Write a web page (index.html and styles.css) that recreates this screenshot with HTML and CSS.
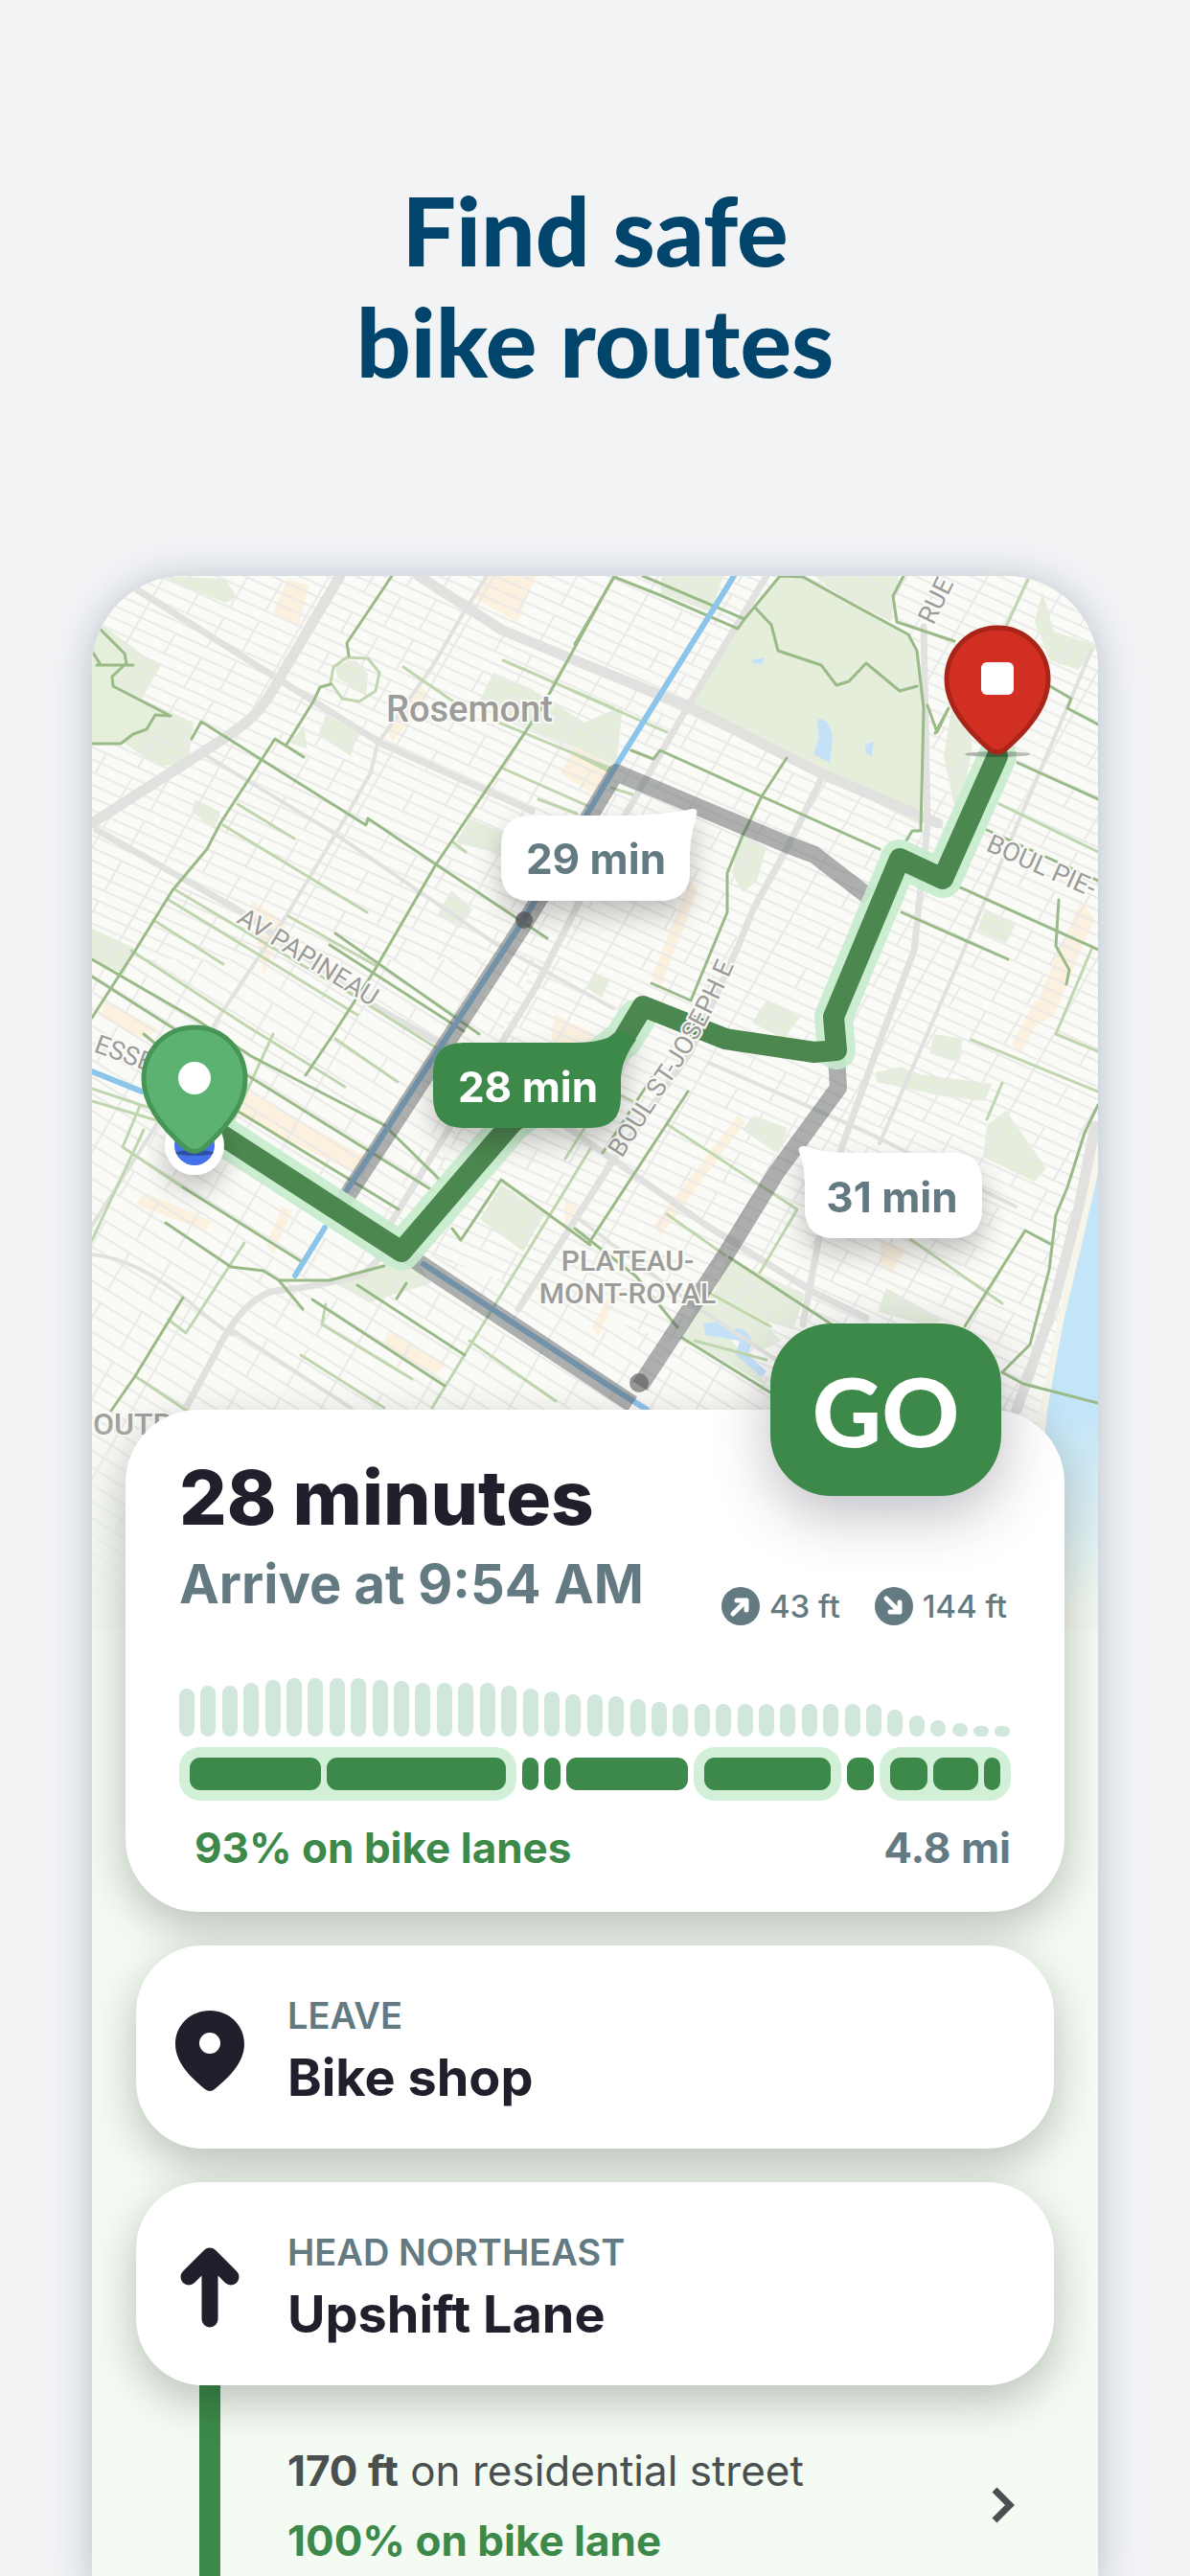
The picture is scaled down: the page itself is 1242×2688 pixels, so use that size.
FILE: index.html
```html
<!DOCTYPE html>
<html lang="en">
<head>
    <meta charset="UTF-8">
    <meta name="viewport" content="width=device-width, initial-scale=1.0">
    <title>Find safe bike routes</title>
    <link rel="stylesheet" href="styles.css">
</head>
<body>

    <main class="page">
      <h1 class="headline">Find safe<br>bike routes</h1>

      <div class="phone">
        <svg class="map" viewBox="96 602 1050 1100" role="img" aria-label="Map with three bike routes">
          <defs>
            <pattern id="streets" width="150" height="48" patternUnits="userSpaceOnUse" patternTransform="matrix(.91 .41 -.5 .87 0 0)">
              <path d="M0 1H150M0 13H150M0 25H150M0 37H150M2 0V48M42 1V25M78 13V48M112 0V37" />
            </pattern>
            <pattern id="streets-low" width="170" height="60" patternUnits="userSpaceOnUse" patternTransform="matrix(.85 .53 -.5 .87 0 0)">
              <path d="M0 1H170M0 16H170M0 31H170M0 46H170M2 0V60M50 1V31M88 16V60M130 0V46" />
            </pattern>
            <linearGradient id="fade" x1="0" y1="1470" x2="0" y2="1680" gradientUnits="userSpaceOnUse">
              <stop offset="0" stop-color="#f1f8ef" stop-opacity="0" />
              <stop offset="1" stop-color="#f1f8ef" />
            </linearGradient>
            <filter id="shadow" x="-30%" y="-30%" width="160%" height="200%">
              <feDropShadow dx="0" dy="14" stdDeviation="14" flood-color="#000" flood-opacity=".24" />
            </filter>
            <path id="joseph" d="M649 1210L700 1130Q742 1070 780 975" />
          </defs>

          <rect x="96" y="602" width="1050" height="1100" fill="#fafaf6" />

          <!-- parks -->
          <g class="park">
            <path d="M814 602L838 603L896 635L948 663L957 680L964 740L961 862L718 740L777 647Z" />
            <path d="M96 645L150 685L168 695L148 730L202 755L196 800L165 800L130 777L96 776Z" />
            <path d="M160 602L235 605L248 625L235 630L190 612Z" />
            <path d="M350 694L372 690L384 704L382 728L365 716L352 708Z" />
            <path d="M340 747L374 765L366 790L332 768ZM318 758L320 782L302 776Z" />
            <path d="M515 703L555 720L610 755L650 738L643 800L560 765L500 733Z" />
            <path d="M690 602H755L742 640L690 620ZM850 602H938L930 650L880 625Z" />
            <path d="M490 855L525 870L545 905L515 890L476 880Z" />
            <path d="M204 835L230 848L224 866L200 848ZM96 970L140 990L130 1018L96 1002Z" />
            <path d="M471 930L493 950L480 970L457 955ZM620 1015L636 1024L628 1042L612 1032Z" />
            <path d="M773 870L800 885L790 920L775 932L764 912ZM1028 950L1060 965L1050 985L1020 972Z" />
            <path d="M800 1045L835 1062L818 1085L785 1068ZM975 1080L1005 1085L1000 1110L970 1100Z" />
            <path d="M914 1120L940 1114L960 1122L1035 1132L1028 1150L985 1145L915 1130Z" />
            <path d="M1050 1160L1092 1220L1080 1234L1026 1208L1030 1175Z" />
            <path d="M786 1165L822 1178L812 1205L775 1180ZM523 1237L569 1267L546 1307L501 1273Z" />
            <path d="M758 1315L840 1352L828 1388L800 1380L745 1352ZM925 1345L984 1378L972 1385L916 1370Z" />
            <path d="M712 1395L735 1350L790 1375L815 1400L795 1410L760 1395L804 1450ZM344 1337L430 1310L450 1340L385 1360Z" />
            <path d="M1088 618L1100 660L1146 675L1125 700L1096 690L1080 650ZM1000 700L1015 780L1000 860L985 790Z" />
          </g>

          <!-- commercial blocks -->
          <g class="shops">
            <path d="M505 602H560L540 650L495 625ZM300 605L322 612L312 655L285 640ZM600 780L640 800L620 830L585 808Z" />
            <path d="M440 718L448 728L410 775L402 762ZM262 940L300 965L275 1018L268 980ZM110 1045L165 1075L150 1085L105 1062Z" />
            <path d="M720 920L728 930L690 1030L680 1020ZM1128 940L1142 960L1100 1060L1068 1080ZM1080 1045L1092 1050L1065 1100L1056 1090Z" />
            <path d="M258 1140L385 1210L375 1228L250 1165ZM150 1245L220 1275L215 1285L142 1258ZM295 1260L305 1265L285 1310L278 1300Z" />
            <path d="M580 1060L620 1080L600 1110L575 1085ZM770 1165L778 1172L690 1290L682 1280ZM920 1295L945 1305L930 1330L918 1318Z" />
            <path d="M405 1390L465 1425L455 1435L400 1405ZM640 1345L645 1350L625 1395L618 1385ZM590 1250L605 1262L590 1280Z" />
          </g>

          <rect x="96" y="602" width="1050" height="400" fill="url(#streets)" />
          <path d="M96 1002H560L420 1300L900 1472V1702H96Z" fill="url(#streets-low)" />
          <path d="M560 1002H1146V1702H900V1472L420 1300Z" fill="url(#streets)" />
          <path d="M814 602L838 603L896 635L948 663L957 680L964 740L961 862L718 740L777 647Z" fill="#e4eedb" />
          <path d="M96 655L140 690L118 715L178 748L140 767L126 777H96Z" fill="#e4efdc" />

          <!-- river -->
          <path d="M1146 1190L1128 1260L1108 1360L1085 1472L1060 1600V1702H1146Z" fill="#f7f4ea" />
          <path d="M1146 1225L1128 1304L1110 1380L1093 1472L1085 1560L1080 1702H1146Z" fill="#c3e5f8" />
          <g fill="#c5e1f8">
            <path d="M853 752Q868 750 869 775L866 797L849 788L855 770ZM903 778L912 775L910 790L904 787ZM784 690L798 687L795 694L786 693Z" />
            <path d="M734 1382L752 1380L765 1388Q780 1384 785 1402L781 1415L800 1432L795 1438L768 1415L772 1400L736 1394Z" />
          </g>

          <!-- main roads -->
          <g class="road">
            <path class="w12" d="M437 602L523 658L600 690L718 738L861 810L979 860" />
            <path class="w8" d="M141 615L280 703L398 777L555 847" />
            <path class="w12" d="M355 602L291 710Q275 740 259 753T216 783L96 860" />
            <path class="w8" d="M101 867L248 950L394 1053L455 1087L600 1183L736 1279L850 1350L904 1376" />
            <path class="w4" d="M508 602L484 640L451 697L394 777L387 807L359 857L301 953L230 1060L160 1180L96 1280" />
            <path class="w8" d="M800 602L718 738L636 880L560 1030L400 1290" />
            <path class="w8" d="M859 810L821 887L786 950L771 987L720 1100L636 1218L541 1367" />
            <path class="w8" d="M964 655L968 863L954 993L921 1080L879 1197L854 1297L838 1383" />
            <path class="w4" d="M1139 680L1004 997L918 1194" />
            <path class="w4" d="M96 1310Q144 1315 198 1360T244 1390L366 1470" />
            <path class="w8" d="M194 1470L223 1417Q255 1350 294 1347T380 1330L440 1270" />
            <path class="w12" d="M1143 1176L1126 1260L1100 1361L1061 1472" />
            <path class="w4" d="M216 790L348 870L519 987L640 1053M740 1110L900 1180L1060 1260M600 1270L720 1360L840 1440" />
          </g>

          <!-- bike lanes, light = shared streets -->
          <g class="lane light">
            <path d="M362 687L384 688L396 703L392 722L375 733L357 730L345 713L348 697Z" />
            <path d="M248 840L307 876M233 862L383 953M182 929L366 1038L480 1110M176 940L373 1060M160 961L233 1007M137 993L255 1070L360 1135M301 957L391 1008" />
            <path d="M421 697L473 733M525 690L640 740M516 753L637 803M523 802L616 843M562 835L602 850M473 880L486 890" />
            <path d="M1073 605L1050 655M600 723L696 765M600 788L640 808M638 823L660 830M1043 840L1146 890M1139 992L1102 1080L1146 1098" />
            <path d="M1014 1086L1146 1140M1046 1131L1030 1169M696 1174L832 1263L793 1329M696 1268L757 1311M950 1294L1046 1361" />
            <path d="M146 1155L128 1198L191 1240M96 1137L180 1165M96 1150L170 1172M255 1298L194 1392L176 1378M616 1200L451 1470M490 1400L580 1463M314 1415L401 1470M340 1362L336 1383L430 1440" />
            <path d="M285 1080L230 1200M350 1085L415 1130M640 1130L590 1210M660 1150L620 1130M740 1350L804 1385" />
            <path d="M96 1295L150 1180M141 1437L220 1490M725 1400L800 1420" />
          </g>
          <g class="lane">
            <path d="M409 602L362 672L364 685M345 715L334 718L327 733L299 778" />
            <path d="M317 791L287 772L230 860L216 887L180 930L141 993L96 1063" />
            <path d="M200 772L210 754L275 795L382 862L384 855L455 903L571 980" />
            <path d="M641 602L565 740L455 903L390 1015L348 1080L319 1123" />
            <path d="M105 658L130 683L132 693L117 707L118 717L178 748L162 747L153 762L139 767L126 777H96M101 695H139M96 680L105 695" />
            <path d="M350 975L500 1080M344 987L484 1077M96 1002L205 1065L262 1103L401 1175L460 1233M96 1020L258 1123L451 1243M150 1080L244 1158L416 1263" />
            <path d="M641 603L600 673M671 602L777 647L770 657L689 622L641 603" />
            <path d="M777 647L814 602L838 603L896 635L948 663L957 680L964 740L961 868L952 868L946 878" />
            <path d="M788 635L805 653L812 680L857 695L873 716L886 712L904 693L939 722L957 717M943 602L932 623L936 650L996 670" />
            <path d="M1096 717L1118 730L1114 740L1146 757M659 784L682 793L689 784L795 832L918 887" />
            <path d="M821 792L795 832L775 873L759 912V953L721 1045L680 1027M968 737L978 765L990 740L976 766" />
            <path d="M1062 797L1146 835M1030 867L1146 920M1002 927L1146 992M941 953L1052 1002M1105 940L1102 988L1116 1013L1113 1028" />
            <path d="M1146 1154L1132 1183L1114 1240L1102 1269L1095 1326L1084 1369L1075 1404L1046 1433L1068 1445L1146 1465" />
            <path d="M1096 1299L1070 1285L1007 1385M686 1117L629 1204M718 1140L614 1299M761 1313L868 1383M712 1397L804 1454M600 1283L664 1333L707 1386" />
            <path d="M173 1277L241 1323L275 1327L291 1337L344 1337L401 1322M191 1240L314 1317M191 1355L141 1437L116 1473M291 1337L316 1367" />
            <path d="M326 1357L464 1447M373 1342L485 1415M523 1232L616 1300M523 1232L481 1295L472 1283M424 1340L414 1356" />
          </g>

          <g class="metro">
            <path d="M766 602L643 800L547 960L362 1243M339 1282L308 1332M96 1119L148 1140M442 1320L640 1450L675 1472" />
          </g>

          <!-- other routes -->
          <g class="route-alt">
            <path d="M907 937L850 893L821 882L643 807L547 965L357 1257" />
            <path d="M424 1310L660 1466" />
            <path d="M668 1447L757 1311L810 1225L875 1136L873 1104" />
          </g>
          <circle cx="547" cy="961" r="9" fill="#555" fill-opacity=".7" />
          <circle cx="667" cy="1444" r="10" fill="#555" fill-opacity=".6" />

          <!-- chosen route -->
          <g class="route-halo">
            <path d="M225 1181L419 1307L534 1173L650 1086L664 1064" />
            <path d="M873 1097L870 1062L939 897L984 918L1041 790" />
          </g>
          <path class="route" d="M220 1178L419 1307L534 1173L650 1086L671 1051L757 1085L850 1099L873 1097L870 1062L939 897L984 918L1041 790" />

          <g class="place">
            <text x="403" y="754" font-size="38">Rosemont</text>
            <text x="655" y="1327" font-size="30" text-anchor="middle">PLATEAU-</text>
            <text x="655" y="1361" font-size="30" text-anchor="middle">MONT-ROYAL</text>
            <text x="97" y="1498" font-size="32">OUTREMONT</text>
          </g>
          <g class="street">
            <text transform="translate(246 963) rotate(32)">AV PAPINEAU</text>
            <text transform="translate(97 1098) rotate(20)">ESSE</text>
            <text transform="translate(974 654) rotate(-64)">RUE</text>
            <text transform="translate(1028 888) rotate(24)">BOUL PIE-</text>
            <text><textPath href="#joseph">BOUL ST-JOSEPH E</textPath></text>
          </g>

          <!-- pins -->
          <ellipse cx="1041" cy="788" rx="34" ry="3" fill="#000" fill-opacity=".25" />
          <circle cx="203" cy="1196" r="31" fill="#fff" filter="url(#shadow)" />
          <circle cx="203" cy="1196" r="21" fill="#4472e8" />
          <ellipse cx="203" cy="1204" rx="20" ry="3" fill="#000" fill-opacity=".3" />
          <path class="pin-end" d="M1041 656C1071 656 1094 680 1094 710C1094 743 1063 771 1049 783Q1041 789 1033 783C1019 771 988 743 988 710C988 680 1011 656 1041 656Z" />
          <rect x="1024" y="692" width="34" height="34" rx="6" fill="#fff" />
          <path class="pin-start" d="M203 1073C233 1073 256 1097 256 1127C256 1160 225 1188 211 1200Q203 1205 195 1200C181 1188 150 1160 150 1127C150 1097 173 1073 203 1073Z" />
          <circle cx="203" cy="1126" r="17" fill="#fff" />

          <!-- time bubbles -->
          <g class="bubble">
            <path d="M555 852H650Q695 852 722 845Q729 844 727 851Q720 875 720 890V909Q720 941 688 941H555Q523 941 523 909V884Q523 852 555 852Z" />
            <text x="622" y="913">29 min</text>
          </g>
          <g class="bubble active">
            <path d="M484 1089H600Q632 1089 650 1076L664 1086Q648 1108 648 1128V1146Q648 1178 616 1178H484Q452 1178 452 1146V1121Q452 1089 484 1089Z" />
            <text x="551" y="1151">28 min</text>
          </g>
          <g class="bubble">
            <path d="M993 1204H880Q860 1204 840 1197Q832 1196 834 1203Q840 1215 840 1235V1261Q840 1293 872 1293H993Q1025 1293 1025 1261V1236Q1025 1204 993 1204Z" />
            <text x="931" y="1266">31 min</text>
          </g>

          <rect x="96" y="1470" width="1050" height="232" fill="url(#fade)" />
        </svg>

        <section class="sheet">
          <article class="card summary">
            <button class="go-btn" type="button">GO</button>
            <h2>28 minutes</h2>
            <div class="arrival">
              <p class="arrive">Arrive at 9:54 AM</p>
              <ul class="climb">
                <li>
                  <svg viewBox="0 0 40 40" aria-hidden="true"><circle cx="20" cy="20" r="20" fill="currentColor" /><path d="M12 28L26 14M16 14H26V24" /></svg>
                  43 ft
                </li>
                <li>
                  <svg viewBox="0 0 40 40" aria-hidden="true"><circle cx="20" cy="20" r="20" fill="currentColor" /><path d="M12 12L26 26M26 16V26H16" /></svg>
                  144 ft
                </li>
              </ul>
            </div>

            <div class="elevation" id="elevation"></div>

            <div class="lanes">
              <div class="group" style="flex-grow: 330">
                <span style="flex-grow: 137"></span>
                <span style="flex-grow: 187"></span>
              </div>
              <span style="flex-grow: 17"></span>
              <span style="flex-grow: 17"></span>
              <span style="flex-grow: 128"></span>
              <div class="group" style="flex-grow: 132">
                <span style="flex-grow: 132"></span>
              </div>
              <span style="flex-grow: 28"></span>
              <div class="group" style="flex-grow: 115">
                <span style="flex-grow: 39"></span>
                <span style="flex-grow: 48"></span>
                <span style="flex-grow: 17"></span>
              </div>
            </div>

            <div class="totals">
              <span class="green">93% on bike lanes</span>
              <span>4.8 mi</span>
            </div>
          </article>

          <article class="card step">
            <svg class="step-icon" viewBox="0 0 72 84" aria-hidden="true">
              <path fill="currentColor" fill-rule="evenodd" d="M36 0C56 0 72 15 72 35C72 56 52 73 41 82Q36 86 31 82C20 73 0 56 0 35C0 15 16 0 36 0ZM36 23A11 11 0 1 0 36 45A11 11 0 1 0 36 23Z" />
            </svg>
            <div>
              <p class="action">Leave</p>
              <h3>Bike shop</h3>
            </div>
          </article>

          <article class="card step">
            <svg class="step-icon" viewBox="0 0 72 84" aria-hidden="true">
              <path fill="none" stroke="currentColor" stroke-width="17" stroke-linecap="round" stroke-linejoin="round" d="M36 10V75M14 31L36 9L58 31" />
            </svg>
            <div>
              <p class="action">Head northeast</p>
              <h3>Upshift Lane</h3>
            </div>
          </article>

          <div class="detail">
            <div class="rail"></div>
            <div class="detail-text">
              <p><strong>170 ft</strong> on residential street</p>
              <p class="green">100% on bike lane</p>
            </div>
            <button class="more-btn" type="button" aria-label="Show details">
              <svg viewBox="0 0 30 44" aria-hidden="true"><path d="M6 6L22 22L6 38" /></svg>
            </button>
          </div>
        </section>
      </div>
    </main>

    <script>
      // Elevation along the route, one bar per sample
      const samples = [50, 53, 53, 56, 59, 61, 61, 61, 61, 59, 58, 56, 56, 56, 56, 53, 50, 47, 44, 44,
                       42, 39, 36, 34, 34, 34, 34, 34, 34, 34, 34, 34, 34, 28, 22, 17, 14, 11, 11];
      const chart = document.getElementById("elevation");

      samples.forEach(height => {
          const bar = document.createElement("span");
          bar.style.height = height + "px";
          chart.appendChild(bar);
      });
    </script>

</body>
</html>
```

FILE: styles.css
```css
* {
    box-sizing: border-box;
    margin: 0;
    padding: 0;
}

body {
    font-family: Inter, "Liberation Sans", sans-serif;
    background-color: #f2f3f5;
    color: #1f202b;
}

button {
    border: none;
    background: none;
    font-family: inherit;
    cursor: pointer;
}

.page {
    display: flex;
    flex-direction: column;
    min-height: 100vh;
    padding: 181px 96px 0;
}

.headline {
    font-family: Lato, sans-serif;
    font-size: 100px;
    line-height: 116px;
    font-weight: 900;
    color: #01456c;
    text-align: center;
    margin-bottom: 188px;
}

.phone {
    flex: 1;
    border-radius: 96px 96px 0 0;
    overflow: hidden;
    background-color: #f3fbf2;
    box-shadow: 0 4px 40px rgba(90, 115, 140, 0.4);
}

/* Map */
.map {
    display: block;
    width: 100%;
    height: auto;
}

#streets path,
#streets-low path {
    fill: none;
    stroke: #e9e9e8;
    stroke-width: 2;
}

.park {
    fill: #e4eedb;
}

.shops {
    fill: #fcf0de;
}

.road,
.lane,
.metro,
.route-alt,
.route-halo,
.route {
    fill: none;
    stroke-linecap: round;
    stroke-linejoin: round;
}

.road {
    stroke: #e1e2df;
}

.w4 { stroke-width: 4; }
.w8 { stroke-width: 7; }
.w12 { stroke-width: 11; }

.lane {
    stroke: #9aba88;
    stroke-width: 3;
}

.lane.light {
    stroke: #bfd6ae;
}

.metro {
    stroke: #8cc5ea;
    stroke-width: 6;
}

.route-alt {
    stroke: #505458;
    stroke-opacity: 0.45;
    stroke-width: 18;
    stroke-linecap: butt;
}

.route-halo {
    stroke: #c5ebcc;
    stroke-opacity: 0.9;
    stroke-width: 40;
}

.route {
    stroke: #4d8750;
    stroke-width: 22;
}

.place,
.street {
    fill: #9c9c9a;
    stroke: #fafaf6;
    stroke-width: 4;
    paint-order: stroke;
    font-family: Roboto, sans-serif;
}

.place {
    font-weight: 500;
}

.street {
    font-size: 27px;
}

.pin-end {
    fill: #d12f22;
    stroke: #a92519;
    stroke-width: 5;
}

.pin-start {
    fill: #5cb270;
    stroke: #479657;
    stroke-width: 5;
}

.bubble {
    fill: #fff;
    filter: url(#shadow);
}

.bubble text {
    fill: #647a82;
    font-size: 44px;
    font-weight: 700;
    text-anchor: middle;
}

.bubble.active {
    fill: #3c894a;
}

.bubble.active text {
    fill: #fff;
}

/* Trip sheet */
.sheet {
    position: relative;
    margin-top: -230px;
    padding: 0 35px 10px;
}

.card {
    position: relative;
    z-index: 1;
    background-color: #fff;
    border-radius: 76px;
    box-shadow: 0 16px 48px rgba(0, 0, 0, 0.24);
}

.summary {
    padding: 46px 56px 41px;
}

.go-btn {
    position: absolute;
    top: -90px;
    right: 66px;
    width: 241px;
    height: 180px;
    border-radius: 64px;
    background-color: #3c894a;
    box-shadow: 0 20px 60px rgba(30, 30, 50, 0.28);
    color: #fff;
    font-family: Lato, sans-serif;
    font-size: 100px;
    font-weight: 900;
}

h2 {
    font-size: 78px;
    line-height: 92px;
    font-weight: 800;
}

.arrival {
    display: flex;
    justify-content: space-between;
    align-items: flex-end;
    margin-top: 12px;
    color: #647a82;
}

.arrive {
    font-size: 56px;
    line-height: 64px;
    font-weight: 700;
    padding-bottom: 11px;
}

.climb {
    display: flex;
    gap: 36px;
    list-style: none;
    padding-right: 4px;
}

.climb li {
    display: flex;
    align-items: center;
    gap: 10px;
    font-size: 33px;
    line-height: 40px;
    font-weight: 500;
}

.climb svg {
    width: 40px;
    height: 40px;
}

.climb path {
    fill: none;
    stroke: #fff;
    stroke-width: 5;
    stroke-linecap: round;
    stroke-linejoin: round;
}

.elevation {
    display: flex;
    justify-content: space-between;
    align-items: flex-end;
    height: 61px;
    margin-top: 55px;
}

.elevation span {
    width: 16px;
    border-radius: 8px;
    background-color: #d1e7dc;
}

.lanes {
    display: flex;
    align-items: center;
    gap: 6px;
    margin-top: 11px;
}

.lanes span {
    flex-basis: 0;
    height: 34px;
    border-radius: 11px;
    background-color: #3c894a;
}

.group {
    display: flex;
    gap: 6px;
    flex-basis: 0;
    padding: 11px;
    border-radius: 22px;
    background-color: #d2f0d8;
}

.totals {
    display: flex;
    justify-content: space-between;
    margin-top: 23px;
    padding-left: 16px;
    font-size: 44px;
    line-height: 52px;
    font-weight: 700;
    color: #647a82;
}

.green {
    color: #3c894a;
    font-weight: 700;
}

.step {
    display: grid;
    grid-template-columns: 154px 1fr;
    column-gap: 4px;
    align-items: center;
    margin: 35px 11px 0;
    padding: 51px 40px 44px 0;
    border-radius: 70px;
}

.step-icon {
    width: 72px;
    height: 84px;
    justify-self: center;
}

.action {
    font-size: 38px;
    line-height: 44px;
    font-weight: 600;
    color: #647a82;
    text-transform: uppercase;
}

h3 {
    margin-top: 13px;
    font-size: 54px;
    line-height: 60px;
    font-weight: 700;
}

.detail {
    display: grid;
    grid-template-columns: 154px 1fr auto;
    column-gap: 4px;
    align-items: center;
    margin: 0 11px -10px;
    color: #4a4f50;
}

.rail {
    width: 22px;
    height: 100%;
    justify-self: center;
    background-color: #3c894a;
}

.detail-text {
    display: grid;
    gap: 21px;
    padding: 63px 0 20px;
    font-size: 44px;
    line-height: 52px;
}

.more-btn {
    padding: 42px 38px 0 0;
    color: #4a4f50;
}

.more-btn svg {
    display: block;
    width: 30px;
    height: 44px;
    fill: none;
    stroke: currentColor;
    stroke-width: 7;
}
```
